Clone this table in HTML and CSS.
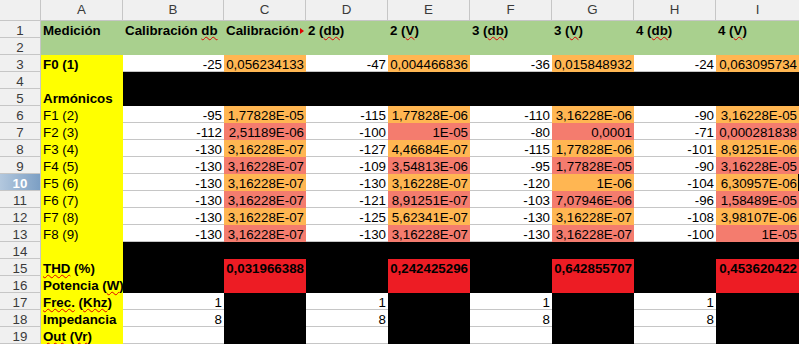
FILE: index.html
```html
<!DOCTYPE html>
<html lang="es">
<head>
<meta charset="utf-8">
<title>Hoja de cálculo</title>
<link rel="stylesheet" href="styles.css">
</head>
<body>
<div class="sheet">
  <div class="corner"></div>
  <div class="ch">A</div><div class="ch">B</div><div class="ch">C</div><div class="ch">D</div><div class="ch">E</div><div class="ch">F</div><div class="ch">G</div><div class="ch">H</div><div class="ch last">I</div>

  <div class="rh">1</div>
  <div class="c g b">Medición</div>
  <div class="c g b">Calibración <span class="sp">db</span></div>
  <div class="c g b clip">Calibración<span class="tri"></span></div>
  <div class="c g b">2 (<span class="sp">db</span>)</div>
  <div class="c g b">2 (<span class="sp">V</span>)</div>
  <div class="c g b">3 (<span class="sp">db</span>)</div>
  <div class="c g b">3 (<span class="sp">V</span>)</div>
  <div class="c g b">4 (<span class="sp">db</span>)</div>
  <div class="c g b">4 (<span class="sp">V</span>)</div>

  <div class="rh">2</div>
  <div class="c g"></div><div class="c g"></div><div class="c g"></div><div class="c g"></div><div class="c g"></div><div class="c g"></div><div class="c g"></div><div class="c g"></div><div class="c g"></div>

  <div class="rh">3</div>
  <div class="c y b">F0 (1)</div>
  <div class="c w n">-25</div><div class="c o n">0,056234133</div>
  <div class="c w n">-47</div><div class="c o n">0,004466836</div>
  <div class="c w n">-36</div><div class="c o n">0,015848932</div>
  <div class="c w n">-24</div><div class="c o n">0,063095734</div>

  <div class="rh">4</div>
  <div class="c y"></div>
  <div class="c k"></div><div class="c k"></div><div class="c k"></div><div class="c k"></div><div class="c k"></div><div class="c k"></div><div class="c k"></div><div class="c k"></div>

  <div class="rh">5</div>
  <div class="c y b">Armónicos</div>
  <div class="c k"></div><div class="c k"></div><div class="c k"></div><div class="c k"></div><div class="c k"></div><div class="c k"></div><div class="c k"></div><div class="c k"></div>

  <div class="rh">6</div>
  <div class="c y">F1 (2)</div>
  <div class="c w n">-95</div><div class="c o n">1,77828E-05</div>
  <div class="c w n">-115</div><div class="c o n">1,77828E-06</div>
  <div class="c w n">-110</div><div class="c o n">3,16228E-06</div>
  <div class="c w n">-90</div><div class="c o n">3,16228E-05</div>

  <div class="rh">7</div>
  <div class="c y">F2 (3)</div>
  <div class="c w n">-112</div><div class="c s n">2,51189E-06</div>
  <div class="c w n">-100</div><div class="c s n">1E-05</div>
  <div class="c w n">-80</div><div class="c s n">0,0001</div>
  <div class="c w n">-71</div><div class="c s n">0,000281838</div>

  <div class="rh">8</div>
  <div class="c y">F3 (4)</div>
  <div class="c w n">-130</div><div class="c o n">3,16228E-07</div>
  <div class="c w n">-127</div><div class="c o n">4,46684E-07</div>
  <div class="c w n">-115</div><div class="c o n">1,77828E-06</div>
  <div class="c w n">-101</div><div class="c o n">8,91251E-06</div>

  <div class="rh">9</div>
  <div class="c y">F4 (5)</div>
  <div class="c w n">-130</div><div class="c s n">3,16228E-07</div>
  <div class="c w n">-109</div><div class="c s n">3,54813E-06</div>
  <div class="c w n">-95</div><div class="c s n">1,77828E-05</div>
  <div class="c w n">-90</div><div class="c s n">3,16228E-05</div>

  <div class="rh sel">10</div>
  <div class="c y">F5 (6)</div>
  <div class="c w n">-130</div><div class="c o n">3,16228E-07</div>
  <div class="c w n">-130</div><div class="c o n">3,16228E-07</div>
  <div class="c w n">-120</div><div class="c o n">1E-06</div>
  <div class="c w n">-104</div><div class="c o n cursor">6,30957E-06</div>

  <div class="rh">11</div>
  <div class="c y">F6 (7)</div>
  <div class="c w n">-130</div><div class="c s n">3,16228E-07</div>
  <div class="c w n">-121</div><div class="c s n">8,91251E-07</div>
  <div class="c w n">-103</div><div class="c s n">7,07946E-06</div>
  <div class="c w n">-96</div><div class="c s n">1,58489E-05</div>

  <div class="rh">12</div>
  <div class="c y">F7 (8)</div>
  <div class="c w n">-130</div><div class="c o n">3,16228E-07</div>
  <div class="c w n">-125</div><div class="c o n">5,62341E-07</div>
  <div class="c w n">-130</div><div class="c o n">3,16228E-07</div>
  <div class="c w n">-108</div><div class="c o n">3,98107E-06</div>

  <div class="rh">13</div>
  <div class="c y">F8 (9)</div>
  <div class="c w n">-130</div><div class="c s n">3,16228E-07</div>
  <div class="c w n">-130</div><div class="c s n">3,16228E-07</div>
  <div class="c w n">-130</div><div class="c s n">3,16228E-07</div>
  <div class="c w n">-100</div><div class="c s n">1E-05</div>

  <div class="rh">14</div>
  <div class="c y"></div>
  <div class="c k"></div><div class="c k"></div><div class="c k"></div><div class="c k"></div><div class="c k"></div><div class="c k"></div><div class="c k"></div><div class="c k"></div>

  <div class="rh">15</div>
  <div class="c y b"><span class="sp">THD</span> (%)</div>
  <div class="c k"></div><div class="c r n b">0,031966388</div>
  <div class="c k"></div><div class="c r n b">0,242425296</div>
  <div class="c k"></div><div class="c r n b">0,642855707</div>
  <div class="c k"></div><div class="c r n b">0,453620422</div>

  <div class="rh">16</div>
  <div class="c y b">Potencia (<span class="sp">W</span>)</div>
  <div class="c k"></div><div class="c r"></div>
  <div class="c k"></div><div class="c r"></div>
  <div class="c k"></div><div class="c r"></div>
  <div class="c k"></div><div class="c r"></div>

  <div class="rh">17</div>
  <div class="c y b"><span class="sp">Frec.</span> (<span class="sp">Khz</span>)</div>
  <div class="c w n">1</div><div class="c k"></div>
  <div class="c w n">1</div><div class="c k"></div>
  <div class="c w n">1</div><div class="c k"></div>
  <div class="c w n">1</div><div class="c k"></div>

  <div class="rh">18</div>
  <div class="c y b">Impedancia</div>
  <div class="c w n">8</div><div class="c k"></div>
  <div class="c w n">8</div><div class="c k"></div>
  <div class="c w n">8</div><div class="c k"></div>
  <div class="c w n">8</div><div class="c k"></div>

  <div class="rh">19</div>
  <div class="c y b"><span class="sp">Out</span> (<span class="sp">Vr</span>)</div>
  <div class="c w"></div><div class="c k"></div>
  <div class="c w"></div><div class="c k"></div>
  <div class="c w"></div><div class="c k"></div>
  <div class="c w"></div><div class="c k"></div>
</div>
</body>
</html>
```

FILE: styles.css
```css
html, body {
  margin: 0;
  padding: 0;
  background: #ffffff;
}

.sheet {
  display: grid;
  grid-template-columns: 41px 82px 101px 82px 82px 82px 82px 82px 82px 83px;
  grid-template-rows: 21px repeat(19, 17px);
  width: 799px;
  font-family: "Liberation Sans", Arial, sans-serif;
  font-size: 13.33px;
  color: #000;
}

.corner,
.ch,
.rh {
  box-sizing: border-box;
  background: #f0f0f0;
  color: #3a3a3a;
  text-align: center;
  border-right: 1px solid #c6c6c6;
  border-bottom: 1px solid #c6c6c6;
}

.ch {
  line-height: 20px;
}

.ch.last {
  border-right: none;
}

.rh {
  line-height: 17px;
  padding-top: 1px;
  height: 17px;
}

.rh.sel {
  background: linear-gradient(to right, #b3c8de, #7c9fc4);
  color: #ffffff;
  font-weight: bold;
}

.c {
  box-sizing: border-box;
  height: 17px;
  padding: 1px 2px 0 2px;
  line-height: 17px;
  white-space: nowrap;
  position: relative;
}

.n {
  text-align: right;
}

.b {
  font-weight: bold;
}

.g { background: #a9d08e; }
.y { background: #ffff00; }
.w { background: #ffffff; border-bottom: 1px solid #c6c6c6; }
.o { background: #ffb652; }
.s { background: #f47c6e; }
.r { background: #ed1c24; }
.k { background: #000000; }

.clip {
  overflow: hidden;
  padding-right: 8px;
}

.tri {
  position: absolute;
  right: 2px;
  top: 7px;
  width: 0;
  height: 0;
  border-top: 3px solid transparent;
  border-bottom: 3px solid transparent;
  border-left: 4px solid #e00000;
}

.sp {
  position: relative;
  z-index: 1;
  text-decoration: underline wavy #e00000;
  text-decoration-thickness: 1px;
  text-underline-offset: 1px;
  text-decoration-skip-ink: none;
}

.cursor::after {
  content: "";
  position: absolute;
  right: -1px;
  top: 0;
  width: 2px;
  height: 17px;
  background: #000;
}
```
